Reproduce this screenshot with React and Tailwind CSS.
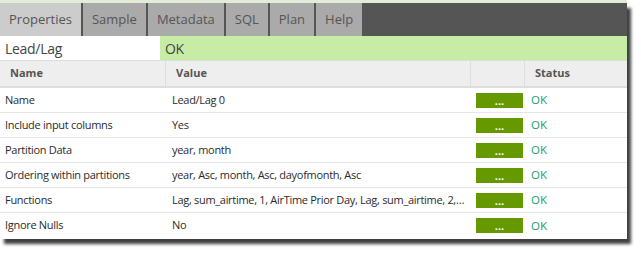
const TABS = ['Properties', 'Sample', 'Metadata', 'SQL', 'Plan', 'Help'];

const ROWS = [
  { name: 'Name', value: 'Lead/Lag 0' },
  { name: 'Include input columns', value: 'Yes' },
  { name: 'Partition Data', value: 'year, month' },
  { name: 'Ordering within partitions', value: 'year, Asc, month, Asc, dayofmonth, Asc' },
  { name: 'Functions', value: 'Lag, sum_airtime, 1, AirTime Prior Day, Lag, sum_airtime, 2, AirTime Two Days Prior' },
  { name: 'Ignore Nulls', value: 'No' },
];

export default function App() {
  return (
    <div className="h-[255px] w-[641px] bg-white" style={{ fontFamily: '"Open Sans", "Liberation Sans", sans-serif' }}>
      <div className="h-[3px] w-[627px] bg-[#e3ecd6]" />
      <div className="w-[627px] bg-white shadow-[4px_5px_3px_rgba(0,0,0,0.75)]">
        {/* tabs */}
        <div className="flex h-[33px] bg-[#555555]">
          {TABS.map((t, i) => (
            <div
              key={t}
              className={`flex items-center px-[9px] text-[13px] text-[#555] mr-[2px] ${i === 0 ? 'bg-[#cccccc]' : 'bg-[#aaaaaa]'}`}
            >
              {t}
            </div>
          ))}
        </div>

        {/* title row */}
        <div className="flex h-[25px] text-[14px] tracking-[-0.3px] text-[#444] border-b border-[#dddddd]">
          <div className="flex w-[160px] items-center bg-white pl-[5px]">Lead/Lag</div>
          <div className="flex flex-1 items-center bg-[#c6eca5] pl-[5px]">OK</div>
        </div>

        {/* header */}
        <div className="flex h-[27px] bg-[#eeeeee] text-[11px] font-bold text-[#555] border-b-2 border-[#dddddd]">
          <div className="flex w-[166px] items-center border-r border-[#dddddd] pl-[10px]">Name</div>
          <div className="flex w-[305px] items-center border-r border-[#dddddd] pl-[10px]">Value</div>
          <div className="w-[54px] border-r border-[#dddddd]" />
          <div className="flex flex-1 items-center pl-[10px]">Status</div>
        </div>

        {/* rows */}
        {ROWS.map((r, i) => (
          <div
            key={r.name}
            className={`flex h-[25px] items-center text-[11px] tracking-[-0.3px] text-[#2b2b2b] ${i < ROWS.length - 1 ? 'border-b border-[#e6e6e6]' : ''}`}
          >
            <div className="w-[166px] truncate pl-[5px]">{r.name}</div>
            <div className="w-[305px] truncate pl-[6px] pr-[6px]">{r.value}</div>
            <div className="flex w-[54px] items-center pl-[5px]">
              <div className="flex h-[15px] w-[47px] items-end justify-center bg-[#669900] text-[11px] font-bold leading-[14px] tracking-normal text-white">
                ...
              </div>
            </div>
            <div className="flex-1 pl-[6px] text-[11.5px] tracking-normal text-[#1a9e6e]">OK</div>
          </div>
        ))}
        <div className="h-[1px]" />
      </div>
    </div>
  );
}
